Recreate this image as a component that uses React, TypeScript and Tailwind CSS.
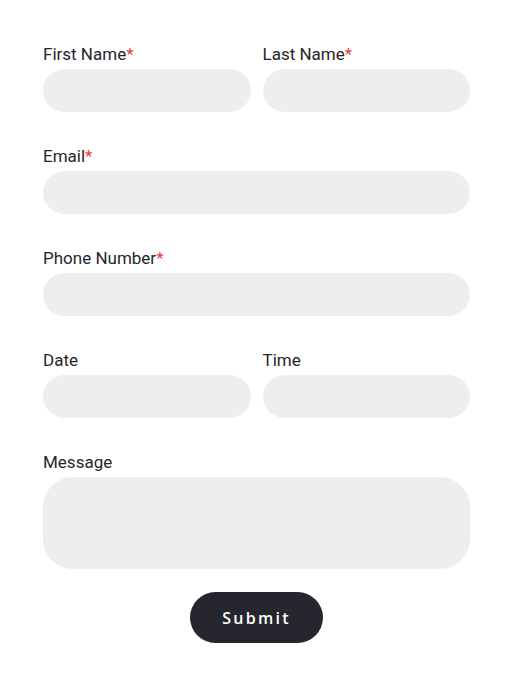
import React from 'react';

function Field({ label, required, className = '', tall = false }: { label: string; required?: boolean; className?: string; tall?: boolean }) {
  return (
    <div className={className}>
      <label className="block h-[22px] mb-1 text-[17px] leading-[22px] text-[#25262b]">
        {label}
        {required && <span className="text-[#f0353d]">*</span>}
      </label>
      {tall ? (
        <textarea className="block w-full h-[92px] rounded-[30px] bg-[#eeeeee] resize-none outline-none px-5 py-3" />
      ) : (
        <input className="block w-full h-[43px] rounded-full bg-[#eeeeee] outline-none px-5" />
      )}
    </div>
  );
}

export default function App() {
  return (
    <div className="min-h-screen bg-white px-[43px] pt-[43px]" style={{ fontFamily: 'Roboto, "Liberation Sans", sans-serif' }}>
      <form className="flex flex-col gap-[33px]" onSubmit={(e) => e.preventDefault()}>
        <div className="grid grid-cols-2 gap-x-3">
          <Field label="First Name" required />
          <Field label="Last Name" required />
        </div>
        <Field label="Email" required />
        <Field label="Phone Number" required />
        <div className="grid grid-cols-2 gap-x-3">
          <Field label="Date" />
          <Field label="Time" />
        </div>
        <Field label="Message" tall />
      </form>
      <div className="flex justify-center mt-[23px]">
        <button
          type="submit"
          className="w-[133px] h-[51px] rounded-full bg-[#26272e] text-white text-[16px] font-semibold tracking-[0.14em]"
          style={{ fontFamily: '"Open Sans", sans-serif' }}
        >
          Submit
        </button>
      </div>
    </div>
  );
}
